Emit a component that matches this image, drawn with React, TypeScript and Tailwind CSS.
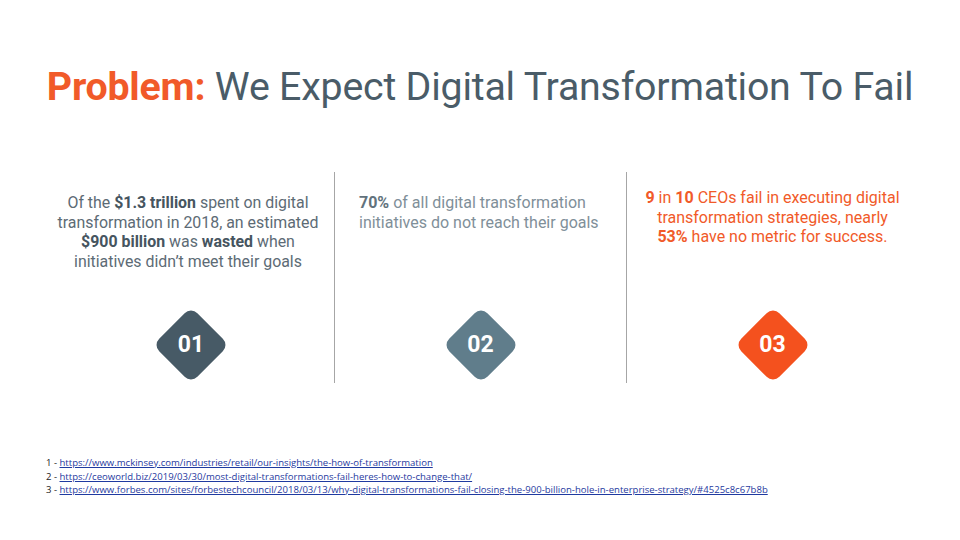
import React from 'react';

const footnotes = [
  { n: '1', url: 'https://www.mckinsey.com/industries/retail/our-insights/the-how-of-transformation' },
  { n: '2', url: 'https://ceoworld.biz/2019/03/30/most-digital-transformations-fail-heres-how-to-change-that/' },
  { n: '3', url: 'https://www.forbes.com/sites/forbestechcouncil/2018/03/13/why-digital-transformations-fail-closing-the-900-billion-hole-in-enterprise-strategy/#4525c8c67b8b' },
];

function Diamond({ label, color }: { label: string; color: string }) {
  return (
    <div className="relative flex h-[70px] w-[70px] items-center justify-center">
      <div className={`absolute h-[54px] w-[54px] rotate-45 rounded-[9px] ${color}`} />
      <span className="relative text-[23px] font-bold text-white">{label}</span>
    </div>
  );
}

export default function App() {
  return (
    <div className="flex h-[540px] w-[960px] flex-col bg-white font-['Roboto',sans-serif]">
      {/* Title */}
      <h1 className="mt-[63px] text-center text-[39.3px] leading-[48px] tracking-[-0.2px] text-[#4a5c68]">
        <span className="font-bold text-[#f15a29]">Problem:</span> We Expect Digital Transformation To Fail
      </h1>

      {/* Three stats */}
      <div className="mt-[61px] ml-[42px] grid h-[211px] w-[876px] grid-cols-3">
        <div className="flex flex-col items-center justify-between pt-[21px] pb-[3px]">
          <p className="text-center text-[15.9px] leading-[19.5px] text-[#5d6b75]">
            Of the <b className="text-[#46555f]">$1.3 trillion</b> spent on digital
            <br />transformation in 2018, an estimated
            <br /><b className="text-[#46555f]">$900 billion</b> was <b className="text-[#46555f]">wasted</b> when
            <br />initiatives didn’t meet their goals
          </p>
          <div className="ml-[6px]">
            <Diamond label="01" color="bg-[#475a66]" />
          </div>
        </div>
        <div className="flex flex-col items-center justify-between border-l border-[#a6a6a6] pt-[21px] pb-[3px]">
          <p className="self-start pl-[24px] text-left text-[16px] leading-[19.5px] text-[#7f8f99]">
            <b className="text-[#62727c]">70%</b> of all digital transformation
            <br />initiatives do not reach their goals
          </p>
          <Diamond label="02" color="bg-[#607d8b]" />
        </div>
        <div className="flex flex-col items-center justify-between border-l border-[#a6a6a6] pt-[16px] pb-[3px]">
          <p className="text-center text-[16px] leading-[19.5px] text-[#f15a29]">
            <b>9</b> in <b>10</b> CEOs fail in executing digital
            <br />transformation strategies, nearly
            <br /><b>53%</b> have no metric for success.
          </p>
          <Diamond label="03" color="bg-[#f4511e]" />
        </div>
      </div>

      {/* Sources */}
      <div className="mt-[73px] ml-[46px] flex flex-col font-['Open_Sans',sans-serif] text-[9.55px] leading-[13.5px] text-[#222]">
        {footnotes.map((f) => (
          <div key={f.n} className="whitespace-nowrap">
            {f.n} - <a className="text-[#1f3aa0] underline">{f.url}</a>
          </div>
        ))}
      </div>
    </div>
  );
}
